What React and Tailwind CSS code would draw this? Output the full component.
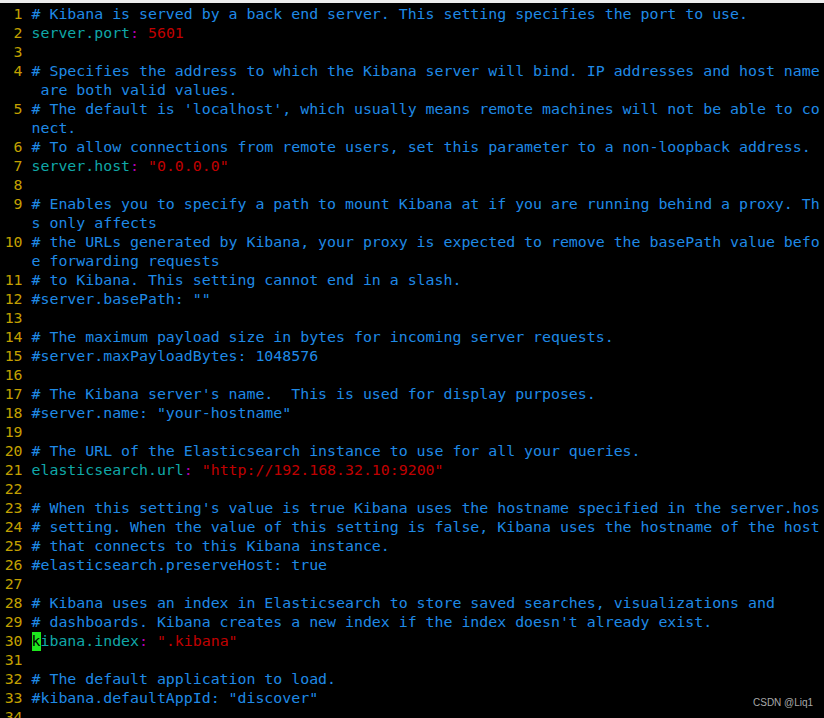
import React from 'react';

// vim colours as seen in the terminal
const C = {
  nr: 'text-[#c4a000]',
  comment: 'text-[#1f8ae6]',
  key: 'text-[#10a8a8]',
  colon: 'text-[#b000b0]',
  value: 'text-[#c00000]',
};

const comment = (text) => [{ t: text, c: C.comment }];
const kv = (key, value) => [
  { t: key, c: C.key },
  { t: ':', c: C.colon },
  { t: ' ' },
  { t: value, c: C.value },
];

// one entry per row on screen: [line number or null, segments]
const rows = [
  [1, comment('# Kibana is served by a back end server. This setting specifies the port to use.')],
  [2, kv('server.port', '5601')],
  [3, []],
  [4, comment('# Specifies the address to which the Kibana server will bind. IP addresses and host names')],
  [null, comment(' are both valid values.')],
  [5, comment("# The default is 'localhost', which usually means remote machines will not be able to con")],
  [null, comment('nect.')],
  [6, comment('# To allow connections from remote users, set this parameter to a non-loopback address.')],
  [7, kv('server.host', '"0.0.0.0"')],
  [8, []],
  [9, comment('# Enables you to specify a path to mount Kibana at if you are running behind a proxy. Thi')],
  [null, comment('s only affects')],
  [10, comment('# the URLs generated by Kibana, your proxy is expected to remove the basePath value befor')],
  [null, comment('e forwarding requests')],
  [11, comment('# to Kibana. This setting cannot end in a slash.')],
  [12, comment('#server.basePath: ""')],
  [13, []],
  [14, comment('# The maximum payload size in bytes for incoming server requests.')],
  [15, comment('#server.maxPayloadBytes: 1048576')],
  [16, []],
  [17, comment("# The Kibana server's name.  This is used for display purposes.")],
  [18, comment('#server.name: "your-hostname"')],
  [19, []],
  [20, comment('# The URL of the Elasticsearch instance to use for all your queries.')],
  [21, kv('elasticsearch.url', '"http://192.168.32.10:9200"')],
  [22, []],
  [23, comment("# When this setting's value is true Kibana uses the hostname specified in the server.host")],
  [24, comment('# setting. When the value of this setting is false, Kibana uses the hostname of the host')],
  [25, comment('# that connects to this Kibana instance.')],
  [26, comment('#elasticsearch.preserveHost: true')],
  [27, []],
  [28, comment('# Kibana uses an index in Elasticsearch to store saved searches, visualizations and')],
  [29, comment("# dashboards. Kibana creates a new index if the index doesn't already exist.")],
  [30, [{ t: 'k', c: 'bg-[#1ee81e] text-black' }, { t: 'ibana.index', c: C.key }, { t: ':', c: C.colon }, { t: ' ' }, { t: '".kibana"', c: C.value }]],
  [31, []],
  [32, comment('# The default application to load.')],
  [33, comment('#kibana.defaultAppId: "discover"')],
  [34, []],
];

function Row({ nr, segs }) {
  return (
    <div className="flex h-[19px] whitespace-pre">
      <span className={C.nr}>{nr == null ? '    ' : `${String(nr).padStart(3)} `}</span>
      {segs.map((s, i) => (
        <span key={i} className={s.c}>{s.t}</span>
      ))}
    </div>
  );
}

export default function App() {
  return (
    <div className="relative w-[824px] h-[718px] overflow-hidden bg-black">
      <div className="h-[3px] bg-[#ececec]" />
      <div className="mt-[2px] w-[824px] ml-[-4.3px] overflow-hidden font-['DejaVu_Sans_Mono',monospace] text-[14.88px] leading-[19px]">
        {rows.map(([nr, segs], i) => (
          <Row key={i} nr={nr} segs={segs} />
        ))}
      </div>
      <div className="absolute left-[753px] top-[697px] text-[10px] leading-[12px] text-[#a8a8a8] font-['Liberation_Sans',Arial,sans-serif]">
        CSDN @Liq1
      </div>
    </div>
  );
}
